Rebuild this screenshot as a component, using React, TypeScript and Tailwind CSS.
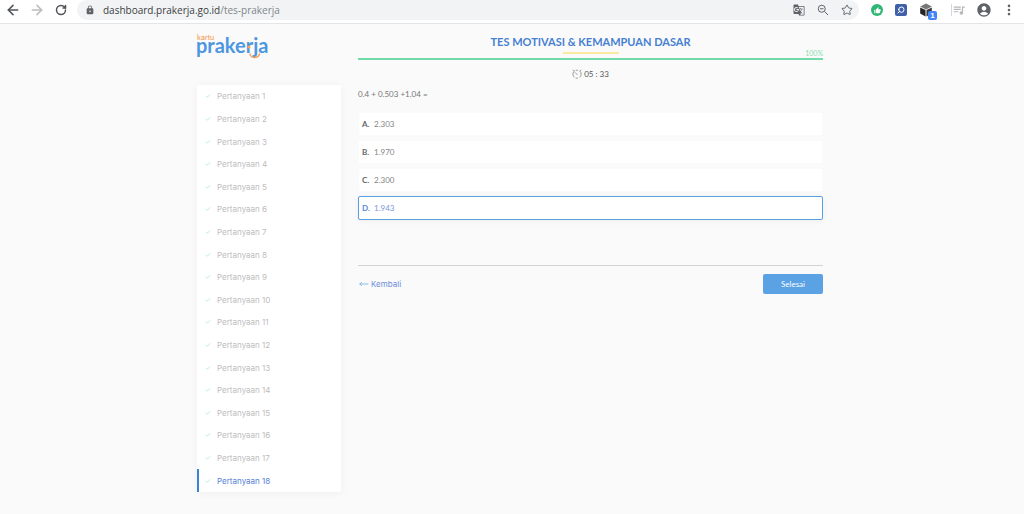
import { useState } from "react";
import {
  ArrowLeft,
  ArrowRight,
  Check,
  MoreVertical,
  MoveLeft,
  RotateCw,
  Search,
  Star,
} from "lucide-react";
import { MdAccountCircle, MdGTranslate, MdLock, MdOutlineQueueMusic, MdThumbUp } from "react-icons/md";

const questions = Array.from({ length: 18 }, (_, i) => i + 1);

const options = [
  { letter: "A", value: "2.303" },
  { letter: "B", value: "1.970" },
  { letter: "C", value: "2.300" },
  { letter: "D", value: "1.943" },
];

function BrowserBar() {
  return (
    <header className="flex h-6 items-start border-b border-[#e4e5e7] bg-white text-[#5f6368]">
      <div className="flex h-5 items-center gap-2 pl-[5px]">
        <button aria-label="Back">
          <ArrowLeft className="h-4 w-4 text-[#50545a]" strokeWidth={2.3} />
        </button>
        <button aria-label="Forward">
          <ArrowRight className="h-4 w-4 text-[#babcbe]" strokeWidth={2.3} />
        </button>
        <button aria-label="Reload" className="pl-0.5">
          <RotateCw className="h-3 w-3 text-[#50545a]" strokeWidth={3} />
        </button>
      </div>
      <div className="ml-2.5 flex h-5 flex-1 items-center rounded-full bg-[#f1f3f4] pl-2 pr-1.5">
        <MdLock className="h-2.5 w-2.5 text-[#5f6368]" />
        <span className="ml-2 font-['Open_Sans',sans-serif] text-[10px] leading-4 text-[#3c4043]">
          dashboard.prakerja.go.id<span className="text-[#80868b]">/tes-prakerja</span>
        </span>
        <div className="ml-auto flex items-center gap-3">
          <button aria-label="Translate"><MdGTranslate className="h-3 w-3" /></button>
          <button aria-label="Zoom out">
            <svg viewBox="0 0 24 24" className="h-3 w-3" fill="none" stroke="currentColor" strokeWidth="2">
              <circle cx="9.500" cy="9.500" r="7" />
              <path d="M15 15l7 7M6 9.500h7" />
            </svg>
          </button>
          <button aria-label="Bookmark"><Star className="h-3 w-3" strokeWidth={2} /></button>
        </div>
      </div>
      <div className="flex h-5 items-center pl-3 pr-2">
        <button aria-label="Rating extension" className="grid h-3 w-3 place-items-center rounded-full bg-[#2fb574]">
          <MdThumbUp className="h-[7px] w-[7px] text-white" />
        </button>
        <button aria-label="Search extension" className="ml-3 grid h-3 w-3 place-items-center rounded-xs bg-[#3f5fa8]">
          <Search className="h-2 w-2 -scale-x-100 text-white" strokeWidth={3} />
        </button>
        <button aria-label="Box extension" className="relative ml-3">
          <svg viewBox="0 0 24 24" className="h-3.5 w-3.5">
            <path d="M12 1 22 6 12 11 2 6Z" fill="#777" />
            <path d="M2 7.5 11.2 12v11L2 18Z" fill="#252525" />
            <path d="M22 7.5 12.8 12v11L22 18Z" fill="#3a3a3a" />
          </svg>
          <span className="absolute -right-1 top-2 h-[9px] w-[9px] rounded-xs bg-[#4285f4] text-center font-['Liberation_Sans',sans-serif] text-[8px] font-bold leading-[9px] text-white">
            1
          </span>
        </button>
        <span className="ml-[18px] h-3 w-px bg-[#d5d7da]" />
        <button aria-label="Media"><MdOutlineQueueMusic className="h-3.5 w-3.5 text-[#b5b7ba]" /></button>
        <button aria-label="Profile" className="ml-2.5"><MdAccountCircle className="h-4 w-4" /></button>
        <button aria-label="Menu" className="ml-2.5"><MoreVertical className="h-3.5 w-3.5" strokeWidth={2.5} /></button>
      </div>
    </header>
  );
}

export default function App() {
  const [selected, setSelected] = useState("D");
  return (
    <div className="min-h-screen bg-[#fafafa] font-['Lato',sans-serif] text-[8px] leading-3 text-[#777]">
      <BrowserBar />
      <div className="mx-auto flex w-full max-w-[630px] gap-[17px] pr-1">
        <aside className="w-36 shrink-0 font-['Inter',sans-serif]">
          <a href="#beranda" aria-label="kartu prakerja" className="block h-[61px] pt-3">
            <svg viewBox="0 0 72 26" className="h-[26px] w-[72px] overflow-visible">
              <text x="0" y="4" fill="#f7a35c" className="font-['Inter',sans-serif] text-[7px] font-medium">kartu</text>
              <text x="-1" y="17" fill="#4c97df" className="font-['Lato',sans-serif] text-[20px] font-bold">prakerja</text>
              <circle cx="52" cy="11" r="1.500" fill="#f7a35c" />
              <path d="M53 18q.5 3.500 4.500 3.500t5-3.500" fill="none" stroke="#f7a35c" strokeWidth="1.500" strokeLinecap="round" />
            </svg>
          </a>
          <nav className="flex min-h-[407px] flex-col rounded-xs bg-white shadow-[0_1px_8px_rgba(0,0,0,0.05)]">
            {questions.map((n) => (
              <a
                key={n}
                href={`#pertanyaan-${n}`}
                className={
                  n === 18
                    ? "flex flex-1 items-center gap-1.5 border-l-2 border-[#3a83d4] pl-1.5 text-[#5580d6]"
                    : "flex flex-1 items-center gap-1.5 border-l-2 border-transparent pl-1.5 text-[#bdbdbd]"
                }
              >
                <Check className="h-1.5 w-1.5 text-[#a5e8cb]" strokeWidth={3} />
                Pertanyaan {n}
              </a>
            ))}
          </nav>
        </aside>
        <main className="min-w-0 flex-1">
          <div className="relative flex h-[34px] flex-col items-center pt-2.5">
            <h1 className="text-[11px] font-bold leading-4 text-[#4680d2]">TES MOTIVASI &amp; KEMAMPUAN DASAR</h1>
            <span className="mt-0.5 h-0.5 w-14 bg-[#fce9a0]" />
            <span className="absolute bottom-0 right-0 text-[7px] leading-[10px] text-[#8ddab3]">100%</span>
          </div>
          <div role="progressbar" aria-label="Kemajuan" aria-valuenow={100} className="h-0.5 bg-[#70dba9]" />
          <div className="mt-2 flex items-center justify-center gap-0.5 text-[#555]">
            <svg viewBox="0 0 24 24" className="h-2.5 w-2.5" fill="none" stroke="#888" strokeWidth="2">
              <path d="M7 4a9.500 9.500 0 0 0-1 16M18 4.500A9.500 9.500 0 0 1 18 20M9 22h5M9 3h5M2 2l3 3M22 2l-3 3M7 8l6 6" />
            </svg>
            <span>05 : 33</span>
          </div>
          <p className="mt-2">0.4 + 0.503 +1.04 =</p>
          <div role="radiogroup" aria-label="Jawaban" className="mt-3 flex flex-col gap-1">
            {options.map(({ letter, value }) => (
              <label
                key={letter}
                className={
                  selected === letter
                    ? "flex h-6 cursor-pointer items-center rounded-xs border border-[#5b9fe0] bg-white pl-[3px] text-[#7897dc] shadow-[0_1px_6px_rgba(0,0,0,0.05)]"
                    : "flex h-6 cursor-pointer items-center rounded-xs border border-[#fafafa] bg-white pl-[3px] text-[#858585]"
                }
              >
                <input
                  type="radio"
                  name="jawaban"
                  value={letter}
                  checked={selected === letter}
                  onChange={() => setSelected(letter)}
                  className="sr-only"
                />
                <span className={selected === letter ? "w-3 font-bold text-[#5588d8]" : "w-3 font-bold text-[#666]"}>{letter}.</span>
                <span>{value}</span>
              </label>
            ))}
          </div>
          <div className="mt-[45px] flex items-start justify-between border-t border-[#d3d3d3] pt-2">
            <button className="flex h-5 items-center gap-0.5 pl-px font-['Inter',sans-serif] text-[#6d8fda]">
              <MoveLeft className="h-2.5 w-2.5 text-[#72aee8]" strokeWidth={2} />
              Kembali
            </button>
            <button className="h-5 w-[60px] rounded-xs bg-[#5aa2e4] text-white">Selesai</button>
          </div>
        </main>
      </div>
    </div>
  );
}
